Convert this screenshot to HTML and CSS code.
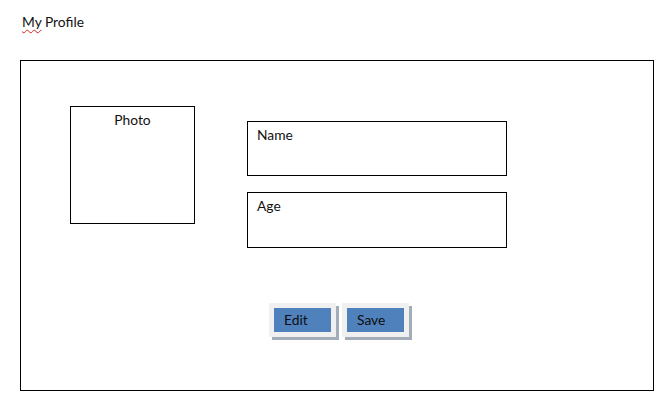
FILE: index.html
```html
<!DOCTYPE html>
<html>
<head>
<meta charset="utf-8">
<link rel="stylesheet" href="styles.css">
</head>
<body>
<div class="title"><span class="spell">My</span> Profile</div>
<div class="frame">
  <div class="top">
    <div class="photo">Photo</div>
    <div class="fields">
      <div class="field name">Name</div>
      <div class="field age">Age</div>
    </div>
  </div>
  <div class="buttons">
    <div class="btn">Edit</div>
    <div class="btn">Save</div>
  </div>
</div>
</body>
</html>
```
FILE: styles.css
```css
html, body {
  margin: 0;
  padding: 0;
  background: #ffffff;
}
body {
  font-family: Lato, "Liberation Sans", sans-serif;
  font-size: 13.8px;
  color: #111;
  width: 665px;
  height: 403px;
  overflow: hidden;
}
.title {
  padding: 13px 0 0 22px;
  height: 60px;
  box-sizing: border-box;
  line-height: 18px;
}
.spell {
  text-decoration: underline wavy #e02020;
  text-decoration-thickness: 1px;
  text-underline-offset: 2px;
}
.frame {
  margin-left: 20px;
  width: 634px;
  height: 331px;
  box-sizing: border-box;
  border: 1px solid #000;
  padding: 45px 0 0 49px;
}
.top {
  display: flex;
  align-items: flex-start;
  gap: 52px;
}
.photo {
  width: 125px;
  height: 118px;
  box-sizing: border-box;
  border: 1px solid #000;
  text-align: center;
  padding-top: 4px;
  line-height: 18px;
}
.fields {
  margin-top: 15px;
  display: flex;
  flex-direction: column;
  gap: 16px;
}
.field {
  width: 260px;
  box-sizing: border-box;
  border: 1px solid #000;
  padding: 4px 0 0 9px;
  line-height: 18px;
}
.name { height: 55px; }
.age { height: 56px; }
.buttons {
  display: flex;
  gap: 6px;
  margin: 55px 0 0 199px;
}
.btn {
  width: 67px;
  height: 34px;
  box-sizing: border-box;
  border: 5px solid #f0f0f0;
  background: #4f81bd;
  box-shadow: 3px 3px 0 #a3acb9;
  padding-left: 10px;
  line-height: 24px;
  color: #0d0d0d;
}
```
